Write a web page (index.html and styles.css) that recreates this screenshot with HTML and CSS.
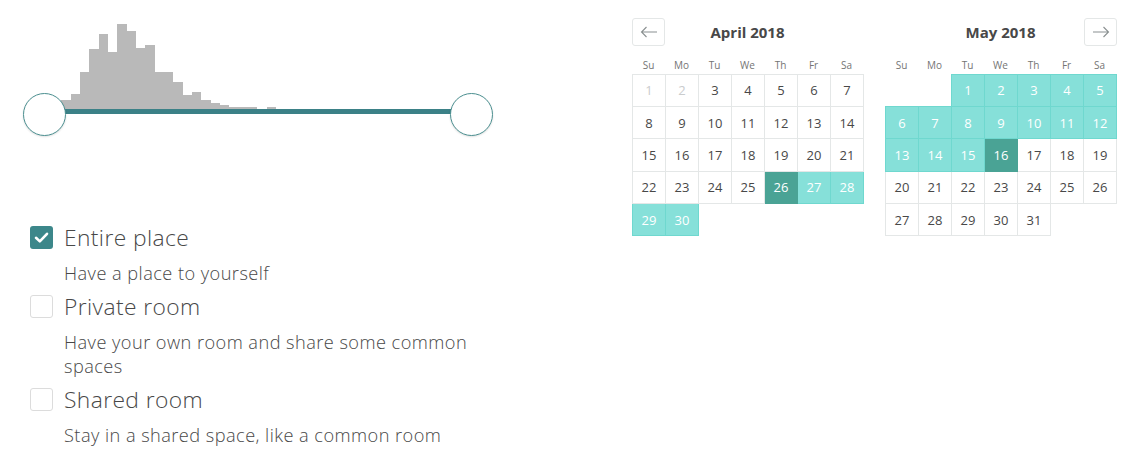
FILE: index.html
```html
<!DOCTYPE html>
<html lang="en">
<head>
<meta charset="utf-8">
<title>Filters</title>
<link rel="stylesheet" href="styles.css">
</head>
<body>
<div class="page">
  <section class="left">
    <div class="slider">
      <div class="hist">
        <span class="bar" style="height:9px"></span>
        <span class="bar" style="height:15px"></span>
        <span class="bar" style="height:37px"></span>
        <span class="bar" style="height:60px"></span>
        <span class="bar" style="height:75px"></span>
        <span class="bar" style="height:57px"></span>
        <span class="bar" style="height:85px"></span>
        <span class="bar" style="height:78px"></span>
        <span class="bar" style="height:61px"></span>
        <span class="bar" style="height:64px"></span>
        <span class="bar" style="height:37px"></span>
        <span class="bar" style="height:37px"></span>
        <span class="bar" style="height:27px"></span>
        <span class="bar" style="height:14px"></span>
        <span class="bar" style="height:17px"></span>
        <span class="bar" style="height:9px"></span>
        <span class="bar" style="height:6px"></span>
        <span class="bar" style="height:4px"></span>
        <span class="bar" style="height:2px"></span>
        <span class="bar" style="height:2px"></span>
        <span class="bar" style="height:2px"></span>
        <span class="bar" style="height:0px"></span>
        <span class="bar" style="height:2px"></span>
      </div>
      <div class="track"></div>
      <span class="handle handle-left"></span>
      <span class="handle handle-right"></span>
    </div>

    <ul class="options">
      <li class="opt">
        <span class="box checked">
          <svg viewBox="0 0 23 23" width="23" height="23"><path d="M6 11.8 L9.8 15.4 L17 7.8" fill="none" stroke="#fff" stroke-width="2.6" stroke-linecap="round" stroke-linejoin="round"/></svg>
        </span>
        <div class="opt-text">
          <div class="opt-title">Entire place</div>
          <div class="opt-desc">Have a place to yourself</div>
        </div>
      </li>
      <li class="opt">
        <span class="box"></span>
        <div class="opt-text">
          <div class="opt-title">Private room</div>
          <div class="opt-desc">Have your own room and share some common spaces</div>
        </div>
      </li>
      <li class="opt">
        <span class="box"></span>
        <div class="opt-text">
          <div class="opt-title">Shared room</div>
          <div class="opt-desc">Stay in a shared space, like a common room</div>
        </div>
      </li>
    </ul>
  </section>

  <section class="calendar">
    <button class="nav nav-prev" aria-label="Previous month">
      <svg viewBox="0 0 18 12" width="18" height="12"><path d="M17 6 H1.5 M6.5 1 L1.5 6 L6.5 11" fill="none" stroke="#8a9091" stroke-width="1.1"/></svg>
    </button>
    <button class="nav nav-next" aria-label="Next month">
      <svg viewBox="0 0 18 12" width="18" height="12"><path d="M1 6 H16.5 M11.5 1 L16.5 6 L11.5 11" fill="none" stroke="#8a9091" stroke-width="1.1"/></svg>
    </button>

    <div class="month">
      <div class="month-title">April 2018</div>
      <div class="dow"><span>Su</span><span>Mo</span><span>Tu</span><span>We</span><span>Th</span><span>Fr</span><span>Sa</span></div>
      <table class="grid">
        <tr><td class="off">1</td><td class="off">2</td><td>3</td><td>4</td><td>5</td><td>6</td><td>7</td></tr>
        <tr><td>8</td><td>9</td><td>10</td><td>11</td><td>12</td><td>13</td><td>14</td></tr>
        <tr><td>15</td><td>16</td><td>17</td><td>18</td><td>19</td><td>20</td><td>21</td></tr>
        <tr><td>22</td><td>23</td><td>24</td><td>25</td><td class="sel">26</td><td class="span">27</td><td class="span">28</td></tr>
        <tr><td class="span">29</td><td class="span">30</td><td class="empty"></td><td class="empty"></td><td class="empty"></td><td class="empty"></td><td class="empty"></td></tr>
      </table>
    </div>

    <div class="month">
      <div class="month-title">May 2018</div>
      <div class="dow"><span>Su</span><span>Mo</span><span>Tu</span><span>We</span><span>Th</span><span>Fr</span><span>Sa</span></div>
      <table class="grid">
        <tr><td class="empty"></td><td class="empty"></td><td class="span">1</td><td class="span">2</td><td class="span">3</td><td class="span">4</td><td class="span">5</td></tr>
        <tr><td class="span">6</td><td class="span">7</td><td class="span">8</td><td class="span">9</td><td class="span">10</td><td class="span">11</td><td class="span">12</td></tr>
        <tr><td class="span">13</td><td class="span">14</td><td class="span">15</td><td class="sel">16</td><td>17</td><td>18</td><td>19</td></tr>
        <tr><td>20</td><td>21</td><td>22</td><td>23</td><td>24</td><td>25</td><td>26</td></tr>
        <tr><td>27</td><td>28</td><td>29</td><td>30</td><td>31</td><td class="empty"></td><td class="empty"></td></tr>
      </table>
    </div>
  </section>
</div>
</body>
</html>
```

FILE: styles.css
```css
* { box-sizing: border-box; }

html, body {
  margin: 0;
  padding: 0;
  background: #fff;
}

body {
  font-family: "Open Sans", "Liberation Sans", sans-serif;
  color: #484848;
}

.page {
  display: flex;
  align-items: flex-start;
}

/* ---------- left column ---------- */
.left {
  flex: 0 0 632px;
  padding-left: 23px;
}

.slider {
  position: relative;
  width: 470px;
  margin-top: 24px;
}

.hist {
  display: flex;
  align-items: flex-end;
  height: 85px;
  margin-left: 38.3px;
}

.bar {
  display: block;
  width: 9.33px;
  background: #b9b9b9;
}

.track {
  height: 5px;
  margin-left: 22px;
  width: 427px;
  background: #3b8187;
}

.handle {
  position: absolute;
  top: 69px;
  width: 43px;
  height: 43px;
  border-radius: 50%;
  border: 1.5px solid #4b8f90;
  background: #fff;
  box-shadow: 0 1px 2px rgba(0, 0, 0, 0.12);
}

.handle-left { left: 0; }
.handle-right { right: 0; }

.options {
  list-style: none;
  margin: 112px 0 0;
  padding: 0 0 0 7px;
  display: flex;
  flex-direction: column;
  gap: 10px;
}

.opt {
  display: grid;
  grid-template-columns: 23px 1fr;
  column-gap: 11px;
  align-items: start;
}

.box {
  display: block;
  width: 23px;
  height: 23px;
  border: 1px solid #dcdcdc;
  border-radius: 3px;
  background: #fff;
}

.box.checked {
  border: none;
  background: #3c878a;
}

.box svg { display: block; }

.opt-title {
  font-size: 22.8px;
  line-height: 24px;
  font-weight: 300;
  letter-spacing: 0.4px;
  color: #484848;
}

.opt-desc {
  margin-top: 12px;
  font-size: 18.2px;
  line-height: 23.4px;
  font-weight: 300;
  letter-spacing: 0.45px;
  max-width: 450px;
  color: #484848;
}

/* ---------- calendar ---------- */
.calendar {
  position: relative;
  display: flex;
  gap: 22px;
  width: 485px;
}

.nav {
  position: absolute;
  top: 18px;
  width: 33px;
  height: 28px;
  padding: 0;
  border: 1px solid #e4e7e7;
  border-radius: 3px;
  background: #fff;
  display: flex;
  align-items: center;
  justify-content: center;
}

.nav-prev { left: 0; }
.nav-next { right: 0; }

.month {
  width: 231px;
}

.month-title {
  margin-top: 22px;
  text-align: center;
  font-size: 15px;
  line-height: 20px;
  font-weight: 700;
  color: #484848;
}

.dow {
  display: grid;
  grid-template-columns: repeat(7, 33px);
  margin-top: 16px;
  height: 14px;
  font-size: 10px;
  line-height: 14px;
  color: #757575;
  margin-bottom: 1.5px;
}

.dow span { text-align: center; }

.grid {
  border-collapse: collapse;
  table-layout: fixed;
  width: 231px;
}

.grid td {
  width: 33px;
  height: 32.4px;
  padding: 0;
  border: 1px solid #e4e7e7;
  text-align: center;
  vertical-align: middle;
  font-size: 13px;
  color: #484848;
}

.grid td.off { color: #cacccd; }

.grid td.empty { border: none; }

.grid td.span {
  background: #86e0d9;
  border-color: #6fd8cf;
  color: #fff;
}

.grid td.sel {
  background: #4aa395;
  border-color: #4aa395;
  color: #fff;
}
```
